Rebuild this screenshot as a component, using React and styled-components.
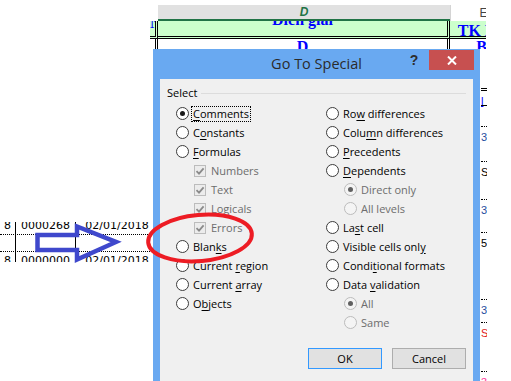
import styled, { createGlobalStyle, css } from 'styled-components'

const GlobalStyle = createGlobalStyle`
  html, body {
    margin: 0;
    padding: 0;
    background: #fff;
  }
  body {
    font-family: "Open Sans", "Noto Sans", sans-serif;
    overflow: hidden;
  }
`

const Page = styled.div`
  position: relative;
  width: 511px;
  height: 381px;
  overflow: hidden;
  background: #fff;
`

/* ---------- spreadsheet behind the dialog ---------- */

const SheetTop = styled.div`
  width: 486px;
  height: 49px;
  padding-top: 5px;
  box-sizing: border-box;
  overflow: hidden;
  display: grid;
  grid-template-columns: 150px 8px 292px 66px;
  grid-template-rows: 16px 18px 14px;
`

const Blank = styled.div``

const ColHeader = styled.div`
  display: flex;
  align-items: center;
  justify-content: center;
  box-sizing: border-box;
  font-family: "Liberation Sans", sans-serif;
  font-size: 12px;
  ${({ $selected }) =>
    $selected
      ? css`
          background: #e1e1e1;
          border-bottom: 2px solid #217346;
          color: #217346;
          font-weight: bold;
          font-style: italic;
        `
      : css`
          background: #fff;
          border-left: 1px solid #d4d4d4;
          color: #444;
        `}
`

const SheetCell = styled.div`
  box-sizing: border-box;
  overflow: hidden;
  background: ${({ $green }) => ($green ? '#ccffcc' : '#fff')};
  border-right: 3px double #000;
  border-bottom: 3px double #000;
  color: #0000ff;
  font-family: "Liberation Serif", serif;
  font-weight: bold;
  font-size: 16px;
  line-height: 16px;
  white-space: nowrap;
  text-align: ${({ $align }) => $align || 'center'};
`

const CellText = styled.span`
  display: block;
  margin-top: ${({ $shift }) => $shift || 0}px;
`

const Body = styled.div`
  display: flex;
  height: 332px;
`

const LeftPane = styled.div`
  position: relative;
  flex: none;
  width: 153px;
  padding-top: 173px;
  box-sizing: border-box;
`

const Strip = styled.div`
  width: 150px;
  height: 40px;
  overflow: hidden;
  font-family: "DejaVu Sans", sans-serif;
  font-size: 11px;
  color: #000;
`

const StripRow = styled.div`
  display: grid;
  grid-template-columns: 16px 60px 82px;
  height: ${({ $h }) => $h}px;
  box-sizing: border-box;
  overflow: hidden;
  border-bottom: ${({ $dotted }) => ($dotted ? '1px dotted #000' : 'none')};
`

const StripCell = styled.div`
  overflow: hidden;
  text-align: center;
  line-height: 12px;
  white-space: nowrap;
  border-right: ${({ $line }) => ($line ? '1px solid #000' : 'none')};
`

const ArrowMark = styled.svg`
  position: absolute;
  left: 0;
  top: 171px;
  overflow: visible;
`

const RightPane = styled.div`
  flex: 1;
  padding-left: 1px;
`

const EdgeStrip = styled.div`
  width: 6px;
  overflow: hidden;
  display: flex;
  flex-direction: column;
  font-family: "Liberation Sans", sans-serif;
  font-size: 11px;
`

const EdgeCell = styled.div`
  flex: none;
  height: ${({ $h }) => $h}px;
  line-height: 14px;
  padding-top: 3px;
  box-sizing: content-box;
  color: ${({ $color }) => $color || '#000'};
  text-decoration: ${({ $underline }) => ($underline ? 'underline' : 'none')};
  border-bottom: ${({ $border }) =>
    $border === 'double'
      ? '3px double #000'
      : $border === 'dotted'
      ? '1px dotted #000'
      : $border === 'solid'
      ? '1px solid #000'
      : 'none'};
`

/* ---------- Go To Special dialog ---------- */

const Dialog = styled.div`
  flex: none;
  align-self: flex-start;
  width: 327px;
  height: 336px;
  background: #69a9f1;
  display: flex;
  flex-direction: column;
`

const TitleBar = styled.div`
  flex: none;
  height: 30px;
  display: grid;
  grid-template-columns: 1fr auto 1fr;
  align-items: start;
`

const Title = styled.div`
  grid-column: 2;
  font-size: 14.5px;
  line-height: 30px;
  color: #2b2b2b;
`

const TitleControls = styled.div`
  grid-column: 3;
  justify-self: end;
  display: flex;
  padding: 1px 6px 0 0;
`

const HelpButton = styled.div`
  width: 30px;
  height: 20px;
  line-height: 20px;
  text-align: center;
  font-family: "Liberation Sans", sans-serif;
  font-weight: bold;
  font-size: 14px;
  color: #2e2e2e;
`

const CloseButton = styled.div`
  width: 45px;
  height: 20px;
  background: #c75050;
  display: flex;
  align-items: center;
  justify-content: center;
`

const Client = styled.div`
  flex: 1;
  margin: 0 7px;
  padding: 6px 7px 0;
  background: #f0f0f0;
  font-size: 11px;
  color: #000;
`

const GroupHeader = styled.div`
  display: flex;
  align-items: center;
  gap: 4px;
  height: 16px;
  line-height: 16px;

  &::after {
    content: '';
    flex: 1;
    height: 1px;
    background: #dcdcdc;
  }
`

const Options = styled.div`
  display: grid;
  grid-template-columns: 150px 1fr;
  margin-top: 3px;
  padding-left: 9px;
`

const OptionColumn = styled.div`
  display: flex;
  flex-direction: column;
`

const OptionRow = styled.div`
  height: 19px;
  display: flex;
  align-items: center;
  padding-left: ${({ $indent }) => $indent || 0}px;
`

const RadioMark = styled.span`
  flex: none;
  width: 13px;
  height: 13px;
  box-sizing: border-box;
  border-radius: 50%;
  border: 1px solid ${({ $disabled }) => ($disabled ? '#bcbcbc' : '#3c3c3c')};
  background: ${({ $disabled }) => ($disabled ? '#f4f4f4' : '#fff')};
  display: flex;
  align-items: center;
  justify-content: center;

  &::after {
    content: '';
    width: 5px;
    height: 5px;
    border-radius: 50%;
    background: ${({ $checked, $disabled }) =>
      !$checked ? 'transparent' : $disabled ? '#606060' : '#1a1a1a'};
  }
`

const CheckMark = styled.span`
  flex: none;
  width: 12px;
  height: 12px;
  margin-right: 1px;
  box-sizing: border-box;
  border: 1px solid #bcbcbc;
  background: #ececec;
  display: flex;
  align-items: center;
  justify-content: center;
`

const OptionLabel = styled.span`
  margin-left: 2px;
  padding: 0 1px;
  line-height: 14px;
  white-space: nowrap;
  border: 1px dotted ${({ $focus }) => ($focus ? '#000' : 'transparent')};
  color: ${({ $disabled }) => ($disabled ? '#6d6d6d' : '#000')};
`

const AccessKey = styled.span`
  text-decoration: underline;
  text-underline-offset: 2px;
`

const Footer = styled.div`
  display: flex;
  justify-content: flex-end;
  gap: 10px;
  margin-top: 16px;
`

const DialogButton = styled.button`
  width: 74px;
  height: 21px;
  box-sizing: border-box;
  padding: 0;
  border: 1px solid ${({ $default }) => ($default ? '#3399ff' : '#adadad')};
  background: #e1e1e1;
  font-family: inherit;
  font-size: 11px;
  color: #000;
`

const Circle = styled.svg`
  position: absolute;
  left: 140px;
  top: 205px;
  pointer-events: none;
`

const leftOptions = [
  { label: 'Comments', key: 0, checked: true, focus: true },
  { label: 'Constants', key: 1 },
  { label: 'Formulas', key: 0 },
  { label: 'Numbers', check: true },
  { label: 'Text', check: true },
  { label: 'Logicals', check: true },
  { label: 'Errors', check: true },
  { label: 'Blanks', key: 4 },
  { label: 'Current region', key: 8 },
  { label: 'Current array', key: 8 },
  { label: 'Objects', key: 1 },
]

const rightOptions = [
  { label: 'Row differences', key: 2 },
  { label: 'Column differences', key: 4 },
  { label: 'Precedents', key: 0 },
  { label: 'Dependents', key: 0 },
  { label: 'Direct only', sub: true, checked: true },
  { label: 'All levels', sub: true },
  { label: 'Last cell', key: 2 },
  { label: 'Visible cells only', key: 17 },
  { label: 'Conditional formats', key: 5 },
  { label: 'Data validation', key: 5 },
  { label: 'All', sub: true, checked: true },
  { label: 'Same', sub: true },
]

const edgeRows = [
  { h: 36, border: 'double' },
  { h: 11, text: 'l', color: '#0000ff', underline: true, border: 'solid' },
  { h: 17, border: 'dotted' },
  { h: 31, text: '3', color: '#1f4e9e', border: 'dotted' },
  { h: 34, text: 'S', border: 'dotted' },
  { h: 29, text: '3', color: '#1f4e9e', border: 'dotted' },
  { h: 63, text: '5', border: 'dotted' },
  { h: 19, text: '3', color: '#1f4e9e', border: 'dotted' },
  { h: 45, text: 'S', color: '#e02020', border: 'dotted' },
  { h: 20, text: '3', color: '#ff3399' },
]

const withKey = (text, key) =>
  key === undefined ? (
    text
  ) : (
    <>
      {text.slice(0, key)}
      <AccessKey>{text[key]}</AccessKey>
      {text.slice(key + 1)}
    </>
  )

const Option = ({ label, keyIndex, checked, focus, check, sub }) => {
  const disabled = check || sub
  return (
    <OptionRow $indent={disabled ? 18 : 0}>
      {check ? (
        <CheckMark>
          <svg width="10" height="10" viewBox="0 0 10 10">
            <path d="M1.5 5.2 L4 7.6 L8.6 2.4" fill="none" stroke="#8a8a8a" strokeWidth="1.8" />
          </svg>
        </CheckMark>
      ) : (
        <RadioMark $checked={checked} $disabled={disabled} />
      )}
      <OptionLabel $focus={focus} $disabled={disabled}>
        {withKey(label, keyIndex)}
      </OptionLabel>
    </OptionRow>
  )
}

const StripLine = ({ h, dotted, shift, cells }) => (
  <StripRow $h={h} $dotted={dotted}>
    {cells.map((c, i) => (
      <StripCell key={i} $line={i < 2}>
        <CellText $shift={shift}>{c}</CellText>
      </StripCell>
    ))}
  </StripRow>
)

export default function App() {
  return (
    <Page>
      <GlobalStyle />

      <SheetTop>
        <Blank />
        <Blank />
        <ColHeader $selected>D</ColHeader>
        <ColHeader>E</ColHeader>

        <Blank />
        <SheetCell $green $align="right">
          <CellText $shift={-6}>Ngày ct</CellText>
        </SheetCell>
        <SheetCell $green>
          <CellText $shift={-9}>Diễn giải</CellText>
        </SheetCell>
        <SheetCell $green>
          <CellText $shift={2}>TK Nợ</CellText>
        </SheetCell>

        <Blank />
        <SheetCell />
        <SheetCell>
          <CellText>D</CellText>
        </SheetCell>
        <SheetCell>
          <CellText>B</CellText>
        </SheetCell>
      </SheetTop>

      <Body>
        <LeftPane>
          <Strip>
            <StripLine h={13} dotted shift={-2} cells={['8', '0000268', '02/01/2018']} />
            <StripLine h={17} dotted cells={['', '', '']} />
            <StripLine h={10} shift={3} cells={['8', '0000000', '02/01/2018']} />
          </Strip>
          <ArrowMark width="125" height="50" viewBox="0 0 125 50">
            <polygon
              points="37.5,15 77,15 77,6.5 116,22 77,39.5 77,30 37.5,30"
              fill="none"
              stroke="#3f48cc"
              strokeWidth="4.5"
            />
          </ArrowMark>
        </LeftPane>

        <Dialog>
          <TitleBar>
            <Title>Go To Special</Title>
            <TitleControls>
              <HelpButton>?</HelpButton>
              <CloseButton>
                <svg width="10" height="9" viewBox="0 0 10 9">
                  <path d="M1 0.5 L9 8.5 M9 0.5 L1 8.5" stroke="#fff" strokeWidth="2" />
                </svg>
              </CloseButton>
            </TitleControls>
          </TitleBar>

          <Client>
            <GroupHeader>Select</GroupHeader>
            <Options>
              <OptionColumn>
                {leftOptions.map((o) => (
                  <Option key={o.label} keyIndex={o.key} {...o} />
                ))}
              </OptionColumn>
              <OptionColumn>
                {rightOptions.map((o) => (
                  <Option key={o.label} keyIndex={o.key} {...o} />
                ))}
              </OptionColumn>
            </Options>
            <Footer>
              <DialogButton $default>OK</DialogButton>
              <DialogButton>Cancel</DialogButton>
            </Footer>
          </Client>
        </Dialog>

        <RightPane>
          <EdgeStrip>
            {edgeRows.map((r, i) => (
              <EdgeCell key={i} $h={r.h} $color={r.color} $underline={r.underline} $border={r.border}>
                {r.text}
              </EdgeCell>
            ))}
          </EdgeStrip>
        </RightPane>
      </Body>

      <Circle width="125" height="65" viewBox="0 0 125 65">
        <ellipse
          cx="60"
          cy="33"
          rx="52"
          ry="23"
          transform="rotate(-5 60 33)"
          fill="none"
          stroke="#ed1c24"
          strokeWidth="4"
        />
      </Circle>
    </Page>
  )
}
